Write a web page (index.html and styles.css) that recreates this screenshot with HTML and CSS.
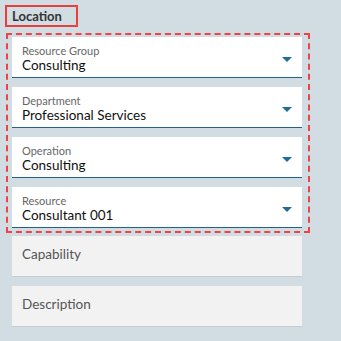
FILE: index.html
```html
<!DOCTYPE html>
<html lang="en">
<head>
  <meta charset="UTF-8" />
  <title>Location</title>
  <link rel="stylesheet" href="styles.css">
</head>
<body>
  <div class="section-title">Location</div>

  <div class="group">
    <div class="field select">
      <div class="label">Resource Group</div>
      <div class="value">Consulting</div>
      <span class="arrow"></span>
    </div>
    <div class="field select">
      <div class="label">Department</div>
      <div class="value">Professional Services</div>
      <span class="arrow"></span>
    </div>
    <div class="field select">
      <div class="label">Operation</div>
      <div class="value">Consulting</div>
      <span class="arrow"></span>
    </div>
    <div class="field select">
      <div class="label">Resource</div>
      <div class="value">Consultant 001</div>
      <span class="arrow"></span>
    </div>
  </div>

  <div class="rest">
    <div class="field empty">Capability</div>
    <div class="field empty">Description</div>
  </div>
</body>
</html>
```

FILE: styles.css
```css
body {
  margin: 0;
  padding: 5px 0 0 0;
  background-color: #d1dde2;
  font-family: Lato, "Liberation Sans", sans-serif;
  color: #222;
}
.section-title {
  width: fit-content;
  margin-left: 5px;
  padding: 2px 14px 2px 5px;
  border: 2px solid #e8403f;
  font-size: 13px;
  font-weight: bold;
  line-height: 14px;
  color: #333;
}
.group {
  width: 290px;
  margin: 6px 0 0 6px;
  padding: 2px 6px 3px 4px;
  border: 2px dashed #f04345;
  display: flex;
  flex-direction: column;
  gap: 9px;
}
.rest {
  margin: 3px 0 0 12px;
  width: 290px;
  display: flex;
  flex-direction: column;
  gap: 9px;
}
.field {
  position: relative;
  box-sizing: border-box;
  height: 41px;
  padding: 7px 10px 0 10px;
}
.select {
  background: #fff;
  border-bottom: 1px solid #236189;
}
.label {
  font-size: 11px;
  line-height: 13px;
  color: #666;
}
.value {
  font-size: 13.5px;
  line-height: 17px;
  color: #111;
}
.arrow {
  position: absolute;
  right: 10px;
  top: 20px;
  width: 0;
  height: 0;
  border-left: 5px solid transparent;
  border-right: 5px solid transparent;
  border-top: 5px solid #1f6d9a;
}
.empty {
  background: #f2f2f2;
  border-bottom: 1px solid #c6cccf;
  padding-top: 10px;
  font-size: 13.5px;
  color: #555;
}
```
